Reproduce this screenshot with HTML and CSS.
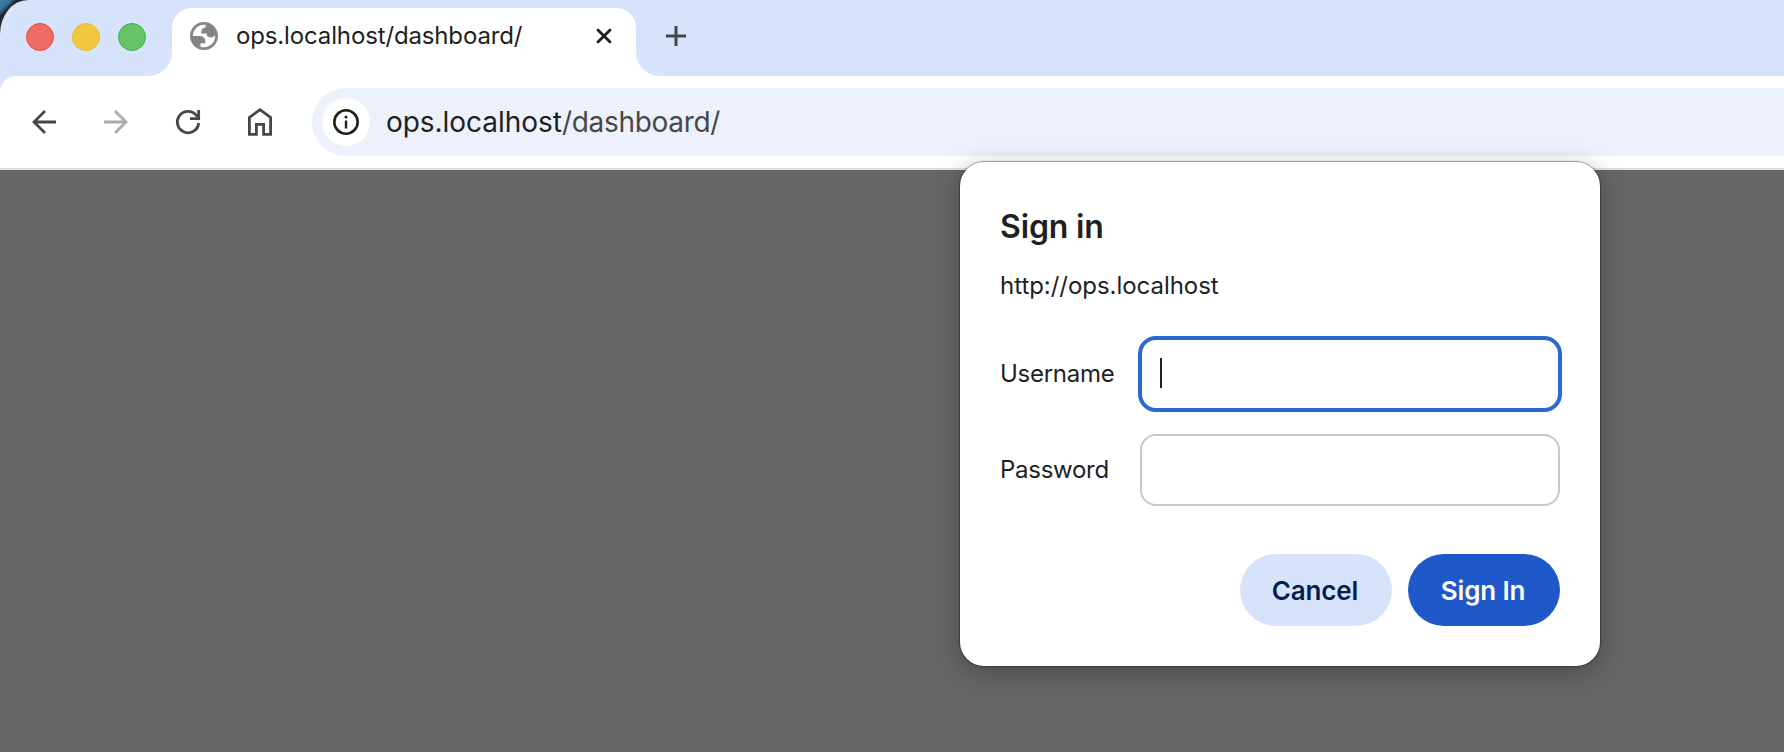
FILE: index.html
```html
<!DOCTYPE html>
<html lang="en">
<head>
<meta charset="utf-8">
<title>ops.localhost/dashboard/</title>
<link rel="stylesheet" href="styles.css">
</head>
<body>
<div class="desktop">
<div class="browser">
  <header class="tabstrip">
    <div class="lights"><span class="light red"></span><span class="light yellow"></span><span class="light green"></span></div>
    <div class="tab">
      <svg class="favicon" viewBox="2 2 20 20"><path fill="#858585" fill-rule="evenodd" d="M12 2C6.48 2 2 6.48 2 12s4.48 10 10 10 10-4.48 10-10S17.52 2 12 2zM4 12h4.400c3.407.022 4.922 1.730 4.543 5.127H9.488v2.470a8.004 8.004 0 0 0 10.498-8.083C19.327 12.504 18.332 13 17 13c-2.137 0-3.206-.916-3.206-2.750h-3.748c-.274-2.728.683-4.092 2.870-4.092 0-.975.327-1.597.811-1.970A8.004 8.004 0 0 0 4 12z"/></svg>
      <span class="tab-title">ops.localhost/dashboard/</span>
      <svg class="close" viewBox="0 0 16 16"><path d="M1.200 1.200l13.600 13.600M14.800 1.200L1.200 14.800" stroke="#1f1f1f" stroke-width="2.800"/></svg>
    </div>
    <svg class="plus" viewBox="0 0 20 20"><path d="M10 0v20M0 10h20" stroke="#474747" stroke-width="3"/></svg>
  </header>
  <nav class="toolbar">
    <svg class="nav" viewBox="0 0 28 28"><path d="M26 14H4M15 3L4 14l11 11" fill="none" stroke="#474747" stroke-width="2.800"/></svg>
    <svg class="nav" viewBox="0 0 28 28"><path d="M2 14h22M13 3l11 11-11 11" fill="none" stroke="#ababab" stroke-width="2.800"/></svg>
    <svg class="nav" viewBox="0 0 28 28"><path d="M24.700 15A10.700 10.700 0 1 1 22.600 7.600L25 10.100" fill="none" stroke="#474747" stroke-width="2.800"/><path d="M24.650 2v8.600H16" fill="none" stroke="#474747" stroke-width="2.800"/></svg>
    <svg class="nav" viewBox="0 0 28 28"><path d="M3.400 26.400V9.400L14 1.700l10.600 7.700v17h-7V16.300h-7.200v10.100z" fill="none" stroke="#474747" stroke-width="2.800"/></svg>
    <div class="omnibox">
      <span class="chip"><svg class="info" viewBox="0 0 26 26"><circle cx="13" cy="13" r="11.700" fill="none" stroke="#1f1f1f" stroke-width="2.600"/><path d="M13 11.500v8" stroke="#1f1f1f" stroke-width="2.400"/><circle cx="13" cy="7.900" r="1.500" fill="#1f1f1f"/></svg></span>
      <span class="url">ops.localhost<span class="path">/dashboard/</span></span>
    </div>
  </nav>
  <main class="page"></main>
</div>
<section class="dialog">
  <h1 class="title">Sign in</h1>
  <p class="origin">http://ops.localhost</p>
  <div class="row"><span class="label">Username</span><div class="field focused"><span class="caret"></span></div></div>
  <div class="row second"><span class="label">Password</span><div class="field"></div></div>
  <div class="actions"><button class="btn cancel">Cancel</button><button class="btn primary">Sign In</button></div>
</section>
</div>
</body>
</html>
```
FILE: styles.css
```css
* { box-sizing: border-box; }
body { margin: 0; font-family: Inter, "Liberation Sans", sans-serif; color: #1f1f1f; }
.desktop { position: relative; width: 1784px; height: 752px; overflow: hidden; background: linear-gradient(135deg, #4480a8 0, #356d93 8px, #25252f 12px, #25252f 30px, #777 60px); }
.browser { height: 752px; display: flex; flex-direction: column; overflow: hidden; border-top-left-radius: 28px 34px; background: #d7e3fb; }
.tabstrip { height: 76px; display: flex; padding-left: 26px; flex: none; }
.lights { display: flex; gap: 18px; margin-top: 23px; width: 146px; }
.light { width: 28px; height: 28px; border-radius: 50%; border: 1px solid; }
.red { background: #ee6a64; border-color: #e9473f; }
.yellow { background: #f3c841; border-color: #efb914; }
.green { background: #65c368; border-color: #37b344; }
.tab { position: relative; width: 464px; height: 68px; margin-top: 8px; padding: 0 24px 0 18px; display: flex; align-items: flex-start; background: #fff; border-radius: 20px 20px 0 0; }
.tab::before, .tab::after { content: ""; position: absolute; bottom: 0; width: 24px; height: 24px; }
.tab::before { left: -24px; background: radial-gradient(circle at 0 0, transparent 23.5px, #fff 24.5px); }
.tab::after { right: -24px; background: radial-gradient(circle at 100% 0, transparent 23.5px, #fff 24.5px); }
.favicon { width: 28px; height: 28px; margin-top: 14px; }
.tab-title { margin-left: 18px; margin-top: 12px; font-size: 24px; line-height: 32px; letter-spacing: -0.14px; white-space: nowrap; }
.close { width: 16px; height: 16px; margin: 20px 0 0 auto; }
.plus { width: 20px; height: 20px; margin: 26px 0 0 30px; }
.toolbar { height: 94px; flex: none; display: flex; align-items: center; gap: 44px; padding-left: 30px; background: #fff; border-top-left-radius: 16px; border-bottom: 2px solid #dfdfdf; }
.nav { width: 28px; height: 28px; flex: none; }
.omnibox { flex: 1; height: 68px; margin-left: -6px; padding-left: 10px; display: flex; align-items: center; background: #edf1fb; border-radius: 34px 0 0 34px; }
.chip { width: 48px; height: 48px; border-radius: 50%; background: #fff; display: flex; align-items: center; justify-content: center; }
.info { width: 26px; height: 26px; }
.url { margin-left: 16px; font-size: 28px; line-height: 36px; letter-spacing: -0.04px; white-space: nowrap; }
.path { color: #474747; letter-spacing: -0.3px; }
.page { flex: 1; background: #666; }
.dialog { position: absolute; left: 960px; top: 162px; width: 640px; height: 504px; padding: 46px 40px 40px; border-radius: 24px; background: #fff; box-shadow: 0 0 1px 1px rgba(0,0,0,.34), 0 6px 28px rgba(0,0,0,.28); }
.title { margin: 0; font-size: 32px; line-height: 38px; font-weight: 600; letter-spacing: -0.15px; }
.origin { margin: 24px 0 0; font-size: 24px; line-height: 32px; letter-spacing: -0.04px; }
.row { display: flex; align-items: center; height: 76px; margin-top: 34px; }
.row.second { margin-top: 20px; }
.label { flex: none; width: 140px; font-size: 24px; line-height: 32px; letter-spacing: -0.28px; }
.field { width: 420px; height: 72px; border: 2px solid #c7c7c7; border-radius: 16px; }
.field.focused { width: 424px; height: 76px; flex: none; margin-left: -2px; border: 4px solid #2b68cf; border-radius: 18px; display: flex; align-items: flex-start; padding: 18px; }
.caret { width: 2px; height: 30px; background: #1f1f1f; }
.actions { display: flex; justify-content: flex-end; gap: 16px; margin-top: 46px; }
.btn { width: 152px; height: 72px; border: 0; border-radius: 36px; padding: 0 2px 0 0; font-family: inherit; font-size: 26px; font-weight: 570; letter-spacing: -0.15px; }
.cancel { background: #d7e3fb; color: #041e49; }
.primary { background: #1f58c9; color: #fff; }
```
